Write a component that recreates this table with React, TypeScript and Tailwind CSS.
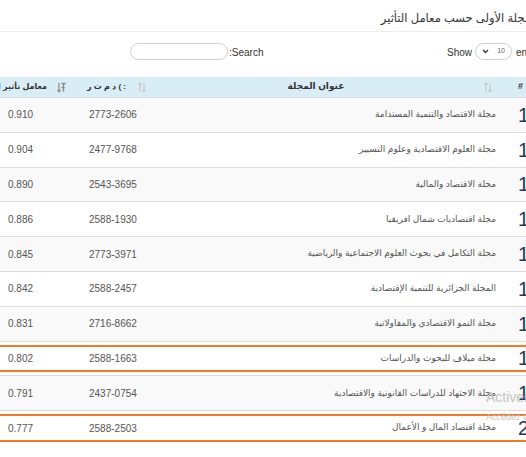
import React from 'react';

const rows = [
  { rank: '11', title: 'مجلة الاقتصاد والتنمية المستدامة', issn: '2773-2606', impact: '0.910' },
  { rank: '12', title: 'مجلة العلوم الاقتصادية وعلوم التسيير', issn: '2477-9768', impact: '0.904' },
  { rank: '13', title: 'مجلة الاقتصاد والمالية', issn: '2543-3695', impact: '0.890' },
  { rank: '14', title: 'مجلة اقتصاديات شمال افريقيا', issn: '2588-1930', impact: '0.886' },
  { rank: '15', title: 'مجلة التكامل في بحوث العلوم الاجتماعية والرياضية', issn: '2773-3971', impact: '0.845' },
  { rank: '16', title: 'المجلة الجزائرية للتنمية الإقتصادية', issn: '2588-2457', impact: '0.842' },
  { rank: '17', title: 'مجلة النمو الاقتصادي والمقاولاتية', issn: '2716-8662', impact: '0.831' },
  { rank: '18', title: 'مجلة ميلاف للبحوث والدراسات', issn: '2588-1663', impact: '0.802', marked: true },
  { rank: '19', title: 'مجلة الاجتهاد للدراسات القانونية والاقتصادية', issn: '2437-0754', impact: '0.791' },
  { rank: '20', title: 'مجلة اقتصاد المال و الأعمال', issn: '2588-2503', impact: '0.777', marked: true },
];

function SortIcon() {
  return (
    <svg width="8" height="11" viewBox="0 0 8 11" className="text-[#c9c9c9] shrink-0">
      <path d="M2 10V1.5M0.5 3L2 1.2L3.5 3" fill="none" stroke="currentColor" strokeWidth="1.2" />
      <path d="M6 1v8.5M4.5 8L6 9.8L7.5 8" fill="none" stroke="currentColor" strokeWidth="1.2" />
    </svg>
  );
}

function SortDescIcon() {
  return (
    <svg width="9" height="11" viewBox="0 0 9 11" className="text-[#8a8a8a] shrink-0">
      <path d="M2 1v8.5M0.5 8L2 9.8L3.5 8" fill="none" stroke="currentColor" strokeWidth="1.2" />
      <path d="M4.5 1.5h4M6.5 1.5v8" fill="none" stroke="currentColor" strokeWidth="1.4" />
      <path d="M4.5 5.5h3" fill="none" stroke="currentColor" strokeWidth="1.2" />
    </svg>
  );
}

export default function App() {
  return (
    <div className="relative w-[526px] h-[457px] overflow-hidden bg-white font-['Liberation_Sans','DejaVu_Sans',sans-serif] text-[#333]">
      {/* heading */}
      <div className="h-[32px] border-b border-[#eee] flex items-center justify-end -mr-[5px] whitespace-nowrap">
        <span dir="rtl" className="shrink-0 text-[11.5px] text-[#333] pt-[6px]">مجلة الأولى حسب معامل التأثير</span>
      </div>

      {/* controls */}
      <div className="h-[45px] flex items-start pt-[11px] pl-[130px] text-[10px] text-[#333] whitespace-nowrap">
        <div className="w-[98px] h-[17px] rounded-full border border-[#cfcfcf] shrink-0" />
        <span className="w-[219px] shrink-0 pl-[1px] pt-[2px]">:Search</span>
        <span className="pt-[2px]">Show</span>
        <div className="ml-[3px] w-[37px] h-[17px] shrink-0 rounded-full border border-[#cfcfcf] flex items-center justify-between px-[6px]">
          <svg width="7" height="5" viewBox="0 0 7 5"><path d="M1 1l2.5 2.5L6 1" fill="none" stroke="#333" strokeWidth="1.3" /></svg>
          <span className="text-[7px] text-[#666]">10</span>
        </div>
        <span className="ml-[4px] pt-[2px]">entries</span>
      </div>

      {/* table header */}
      <div className="grid grid-cols-[72px_80px_348px_60px] w-[560px] h-[20px] bg-[#d9edf7] text-[9px] font-bold text-[#333]">
        <div className="flex items-center justify-end pr-[6px] gap-[10px] whitespace-nowrap overflow-hidden">
          <span dir="rtl" className="shrink-0 text-[8px]">معامل تأثير البوابة</span>
          <SortDescIcon />
        </div>
        <div className="flex items-center justify-end pr-[6px] gap-[12px] whitespace-nowrap">
          <bdo dir="ltr" className="text-[8px]">ر ت م د ( :</bdo>
          <SortIcon />
        </div>
        <div className="relative flex items-center justify-center pr-[20px]">
          <span dir="rtl">عنوان المجلة</span>
          <div className="absolute right-[8px] top-[5px]"><SortIcon /></div>
        </div>
        <div className="flex items-center pl-[18px]">#</div>
      </div>

      {/* table body */}
      {rows.map((r, i) => (
        <div
          key={r.rank}
          className={`relative grid grid-cols-[72px_80px_348px_60px] w-[560px] h-[34.8px] border-t border-[#ddd] text-[10px] text-[#555] ${i % 2 === 0 ? 'bg-[#f9f9f9]' : 'bg-white'}`}
        >
          <div className="flex items-center pl-[8px]">{r.impact}</div>
          <div className="flex items-center pl-[17px]">{r.issn}</div>
          <div className="flex items-center justify-end pr-[4px] text-[9px] whitespace-nowrap">
            <span dir="rtl">{r.title}</span>
          </div>
          <div className="flex items-center pl-[18px] text-[20px] text-[#1e3a56] leading-none">{r.rank}</div>
          {r.marked && (
            <div className="absolute left-[-4px] right-[-4px] top-[3px] bottom-[3px] border-2 border-[#f47a22] pointer-events-none" />
          )}
        </div>
      ))}

      {/* windows activation watermark */}
      <div className="absolute left-[486px] top-[390px] whitespace-nowrap text-[#c4c4c4] leading-none">
        <div className="text-[14px]">Activer Windows</div>
        <div className="text-[9px] mt-[9px]">Accédez aux paramètres</div>
      </div>
    </div>
  );
}
